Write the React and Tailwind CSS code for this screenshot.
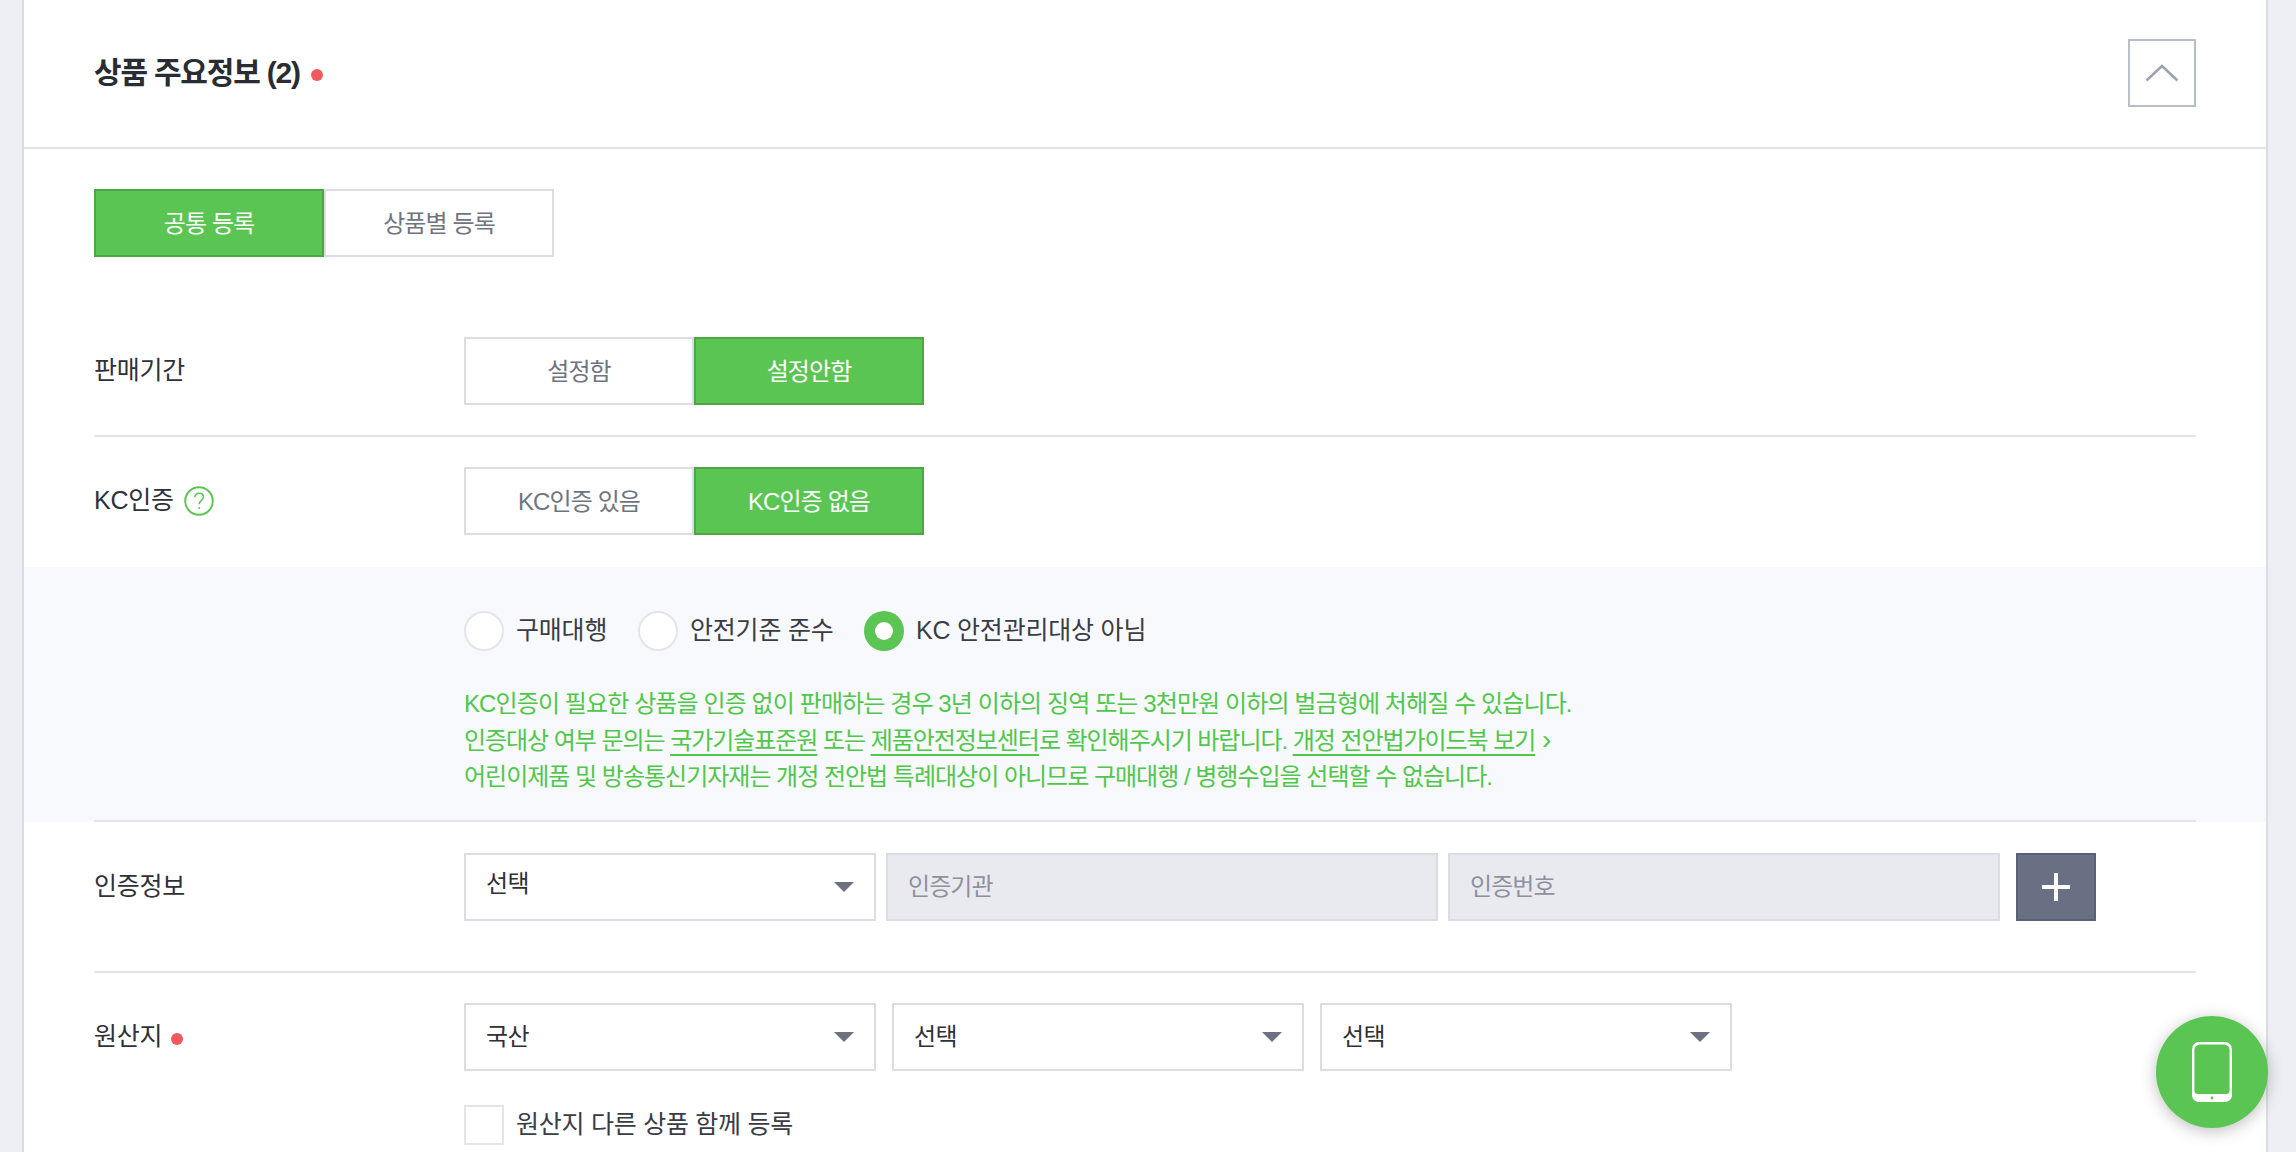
const font = "font-['Liberation_Sans','Noto_Sans_CJK_KR',sans-serif]"

const Segment = ({ label, active, className = '' }) => (
  <button
    type="button"
    className={`h-[68px] w-[230px] border-2 pt-px text-[24px] tracking-[-0.9px] ${
      active ? 'border-[#4ca645] bg-[#5bc553] text-white' : 'border-[#dcdde3] bg-white text-[#70747f]'
    } ${className}`}
  >
    {label}
  </button>
)

const Dot = ({ className = '' }) => <span className={`inline-block h-3 w-3 rounded-full bg-[#f05a5f] ${className}`} />

const Arrow = () => (
  <svg width="20" height="10" viewBox="0 0 20 10" className="shrink-0">
    <path d="M0 0h20L10 10z" fill="#6e7280" />
  </svg>
)

const Select = ({ value, textClass = '' }) => (
  <div className="flex h-[68px] w-[412px] shrink-0 items-center justify-between border-2 border-[#dcdde3] bg-white pl-5 pr-[20px]">
    <span className={`text-[24px] tracking-[-0.5px] text-[#2f3139] ${textClass}`}>{value}</span>
    <Arrow />
  </div>
)

const Input = ({ placeholder }) => (
  <div className="flex h-[68px] w-[552px] shrink-0 items-center border-2 border-[#dcdde3] bg-[#e9eaef] pl-5 text-[24px] tracking-[-0.9px] text-[#8e919c]">
    {placeholder}
  </div>
)

const Radio = ({ label, checked, className = '' }) => (
  <label className={`flex items-center gap-3 ${className}`}>
    {checked ? (
      <span className="flex h-10 w-10 items-center justify-center rounded-full bg-[#5bc553]">
        <span className="h-[18px] w-[18px] rounded-full bg-white" />
      </span>
    ) : (
      <span className="h-10 w-10 rounded-full border-2 border-[#e3e5ea] bg-white" />
    )}
    <span className="text-[25px] tracking-[-0.2px] text-[#3a3c44]">{label}</span>
  </label>
)

const Link = ({ children }) => <a className="underline decoration-2 underline-offset-[5px]">{children}</a>

const App = () => {
  return (
    <div className={`relative h-[1152px] overflow-hidden bg-[#eeeff4] pl-[22px] pr-[28px] ${font}`}>
      <div className="h-full border-x-2 border-[#dcdde3] bg-white">
        <div className="flex h-[149px] items-center justify-between border-b-2 border-[#e3e5ea] px-[70px] pb-px">
          <h2 className="-mt-[2px] flex items-center text-[30px] font-bold tracking-[-1.2px] text-[#2a2c33]">
            상품 주요정보 (2)
            <Dot className="ml-[11px] mt-[6px]" />
          </h2>
          <button type="button" className="flex h-[68px] w-[68px] items-center justify-center border-2 border-[#b9bdca] bg-white">
            <svg width="34" height="18" viewBox="0 0 34 18" fill="none">
              <path d="M1.500 16.500L17 2l15.500 14.500" stroke="#9ca1b2" strokeWidth="2.400" />
            </svg>
          </button>
        </div>

        <div className="px-[70px] pt-10">
          <div className="flex">
            <Segment label="공통 등록" active />
            <Segment label="상품별 등록" />
          </div>

          <div className="mt-20 flex items-center border-b-2 border-[#e3e5ea] pb-[30px]">
            <div className="w-[370px] text-[25px] tracking-[-0.25px] text-[#2f3139]">판매기간</div>
            <Segment label="설정함" />
            <Segment label="설정안함" active />
          </div>

          <div className="flex items-center pb-8 pt-[30px]">
            <div className="flex w-[370px] items-center gap-[10px] text-[25px] tracking-[-0.25px] text-[#2f3139]">
              KC인증
              <svg width="30" height="30" viewBox="0 0 30 30" fill="none">
                <circle cx="15" cy="15" r="13.800" stroke="#5bc553" strokeWidth="2" />
                <path d="M10.800 11.400c.2-2.800 2-4.200 4.400-4.200 2.500 0 4.200 1.500 4.200 3.700 0 3.300-4.200 3.600-4.200 7.300" stroke="#5bc553" strokeWidth="1.500" />
                <circle cx="15.200" cy="22" r="1" fill="#5bc553" />
              </svg>
            </div>
            <Segment label="KC인증 있음" />
            <Segment label="KC인증 없음" active />
          </div>
        </div>

        <div className="h-[255px] bg-[#f8f9fc] pl-[440px] pt-11">
          <div className="flex h-10 items-center">
            <Radio label="구매대행" className="w-[174px]" />
            <Radio label="안전기준 준수" className="w-[226px]" />
            <Radio label="KC 안전관리대상 아님" checked />
          </div>
          <div className="mt-[35px] text-[24px] leading-[36px] text-[#4fc74a]">
            <p className="tracking-[-0.9px]">KC인증이 필요한 상품을 인증 없이 판매하는 경우 3년 이하의 징역 또는 3천만원 이하의 벌금형에 처해질 수 있습니다.</p>
            <p className="tracking-[-1.05px]">
              인증대상 여부 문의는 <Link>국가기술표준원</Link> 또는 <Link>제품안전정보센터</Link>로 확인해주시기 바랍니다.{' '}
              <Link>개정 전안법가이드북 보기</Link> <span className="ml-px text-[28px] leading-[36px]">›</span>
            </p>
            <p className="tracking-[-1px]">어린이제품 및 방송통신기자재는 개정 전안법 특례대상이 아니므로 구매대행 / 병행수입을 선택할 수 없습니다.</p>
          </div>
        </div>

        <div className="-mt-[2px] px-[70px]">
          <div className="flex items-center border-y-2 border-[#e3e5ea] pb-[50px] pt-[31px]">
            <div className="w-[370px] text-[25px] tracking-[-0.25px] text-[#2f3139]">인증정보</div>
            <div className="flex gap-2.5">
              <Select value="선택" textClass="-mt-[6px]" />
              <Input placeholder="인증기관" />
              <Input placeholder="인증번호" />
            </div>
            <button type="button" className="ml-4 flex h-[68px] w-20 items-center justify-center border-2 border-[#5c6275] bg-[#6a7084]">
              <svg width="28" height="28" viewBox="0 0 28 28">
                <path d="M14 0v28M0 14h28" stroke="#fff" strokeWidth="4" />
              </svg>
            </button>
          </div>

          <div className="flex pt-[30px]">
            <div className="flex h-[68px] w-[370px] items-center gap-[9px] text-[25px] tracking-[-0.25px] text-[#2f3139]">
              원산지
              <Dot className="mt-1" />
            </div>
            <div>
              <div className="flex gap-4">
                <Select value="국산" />
                <Select value="선택" />
                <Select value="선택" />
              </div>
              <label className="mt-[34px] flex items-center gap-3">
                <span className="h-10 w-10 border-2 border-[#e3e5ea] bg-white" />
                <span className="text-[25px] tracking-[-0.25px] text-[#3a3c44]">원산지 다른 상품 함께 등록</span>
              </label>
            </div>
          </div>
        </div>
      </div>

      <button
        type="button"
        className="absolute left-[2156px] top-[1016px] flex h-28 w-28 items-center justify-center rounded-full bg-[#5bc553] shadow-[0_3px_16px_rgba(0,0,0,0.25)]"
      >
        <svg width="40" height="60" viewBox="0 0 40 60">
          <path
            fillRule="evenodd"
            d="M7 0h26a7 7 0 0 1 7 7v46a7 7 0 0 1-7 7H7a7 7 0 0 1-7-7V7a7 7 0 0 1 7-7zm1 2.400A5.600 5.600 0 0 0 2.400 8v40.600a3.400 3.400 0 0 0 3.400 3.400h28.400a3.400 3.400 0 0 0 3.400-3.400V8A5.600 5.600 0 0 0 32 2.400z"
            fill="#fff"
          />
          <circle cx="20" cy="56" r="1.400" fill="#5bc553" />
        </svg>
      </button>
    </div>
  )
}

export default App
